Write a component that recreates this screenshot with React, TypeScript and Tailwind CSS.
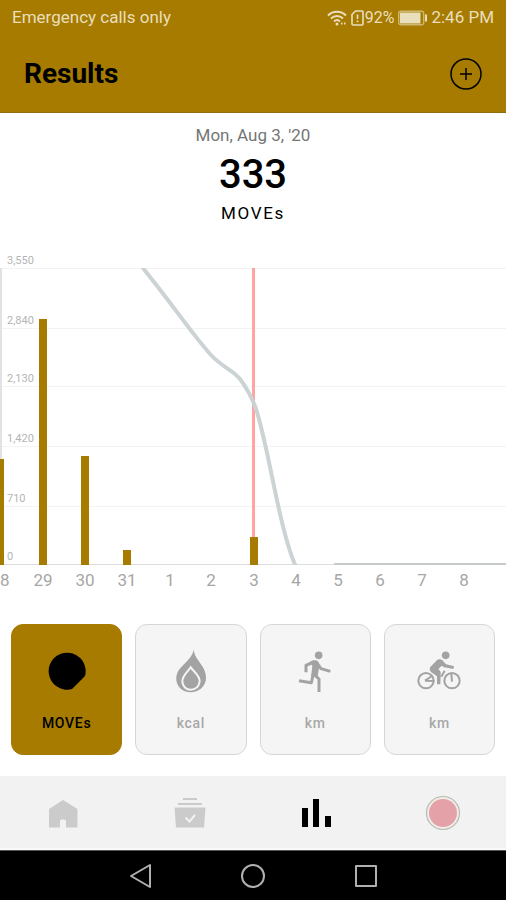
import type { ReactNode } from 'react';

const GOLD = '#a67b00';

const gridLines = [
  { label: '3,550', y: 28 },
  { label: '2,840', y: 88 },
  { label: '2,130', y: 146 },
  { label: '1,420', y: 206 },
  { label: '710', y: 266 },
  { label: '0', y: 324 },
];

const days = [
  { label: '28', x: 0, top: 219 },
  { label: '29', x: 43, top: 79 },
  { label: '30', x: 85, top: 216 },
  { label: '31', x: 127, top: 310 },
  { label: '1', x: 170 },
  { label: '2', x: 211 },
  { label: '3', x: 254, top: 297 },
  { label: '4', x: 296 },
  { label: '5', x: 338 },
  { label: '6', x: 380 },
  { label: '7', x: 422 },
  { label: '8', x: 464 },
];

function StatusBar() {
  return (
    <div className="flex h-9 items-center justify-between px-3 text-[17px] text-[#eadfbd]">
      <span>Emergency calls only</span>
      <div className="flex items-center">
        <svg width="20" height="18" viewBox="0 0 20 18" fill="none" stroke="currentColor" strokeWidth="2" aria-hidden="true">
          <path d="M1 6.500C6 1.500 14 1.500 19 6.500" />
          <path d="M4 9.500C7.500 6 12.500 6 16 9.500" />
          <path d="M7 12.500C9 10.500 11 10.500 13 12.500" />
          <circle cx="10" cy="15" r="1.500" fill="currentColor" stroke="none" />
          <path d="M14 14.500h1.500M17 14.500h1.500" />
        </svg>
        <svg className="ml-1" width="13" height="16" viewBox="0 0 13 16" fill="none" stroke="currentColor" strokeWidth="1.6" aria-hidden="true">
          <path d="M4.500 1H11a1 1 0 0 1 1 1v12a1 1 0 0 1-1 1H2a1 1 0 0 1-1-1V4.500z" />
          <path d="M6.500 4.500v4.500M6.500 10.500v1.800" />
        </svg>
        <span className="ml-px text-base">92%</span>
        <svg className="ml-1" width="29" height="16" viewBox="0 0 29 16" aria-hidden="true">
          <rect x="0.700" y="1.200" width="25" height="13.600" rx="2" fill="none" stroke="currentColor" strokeOpacity="0.600" strokeWidth="1.400" />
          <rect x="2" y="2.500" width="20.500" height="11" fill="currentColor" />
          <rect x="27" y="4.500" width="2" height="7" fill="currentColor" />
        </svg>
        <span className="ml-1">2:46 PM</span>
      </div>
    </div>
  );
}

function ResultsChart() {
  return (
    <svg className="block w-full font-normal" viewBox="0 0 506 364" role="img" aria-label="MOVEs per day">
      {gridLines.map((line) => (
        <g key={line.label}>
          <rect x="0" y={line.y} width="506" height="1" fill={line.y === 324 ? '#dedede' : '#f3f3f3'} />
          <text x="7" y={line.y - 4} fontSize="11" fill="#b4b4b4">
            {line.label}
          </text>
        </g>
      ))}
      <rect x="0" y="28" width="2" height="297" fill="#e2e2e2" />
      <rect x="252" y="28" width="3" height="297" fill="#ffa3a3" />
      <clipPath id="plot">
        <rect x="0" y="28" width="506" height="297" />
      </clipPath>
      <path
        d="M140 24L150 37C175 68 192 94 211 115C222 127 233 130 240 139C246 147 251 156 255 166C268 202 279 290 296 327"
        fill="none"
        stroke="#ccd3d4"
        strokeWidth="4"
        clipPath="url(#plot)"
      />
      <rect x="334" y="323" width="172" height="2" fill="#c6cacb" />
      {days.map((day) => (
        <g key={day.label}>
          {day.top && <rect x={day.x - 4} y={day.top} width="8" height={325 - day.top} fill={GOLD} />}
          <text x={day.x} y="346" fontSize="17" textAnchor="middle" fill="#a6a6a6">
            {day.label}
          </text>
        </g>
      ))}
    </svg>
  );
}

function MovesIcon() {
  return (
    <svg width="38" height="38" viewBox="0 0 38 38" fill="currentColor" aria-hidden="true">
      <path d="M37 24L24 37A18.500 18.500 0 1 1 37 24Z" />
    </svg>
  );
}

function FlameIcon() {
  return (
    <svg width="36" height="44" viewBox="518 99 108 132" aria-hidden="true">
      <path
        d="M580 102C583 124 598 136 609 156C632 200 601 229 572 229C539 229 521 201 530 173C537 150 575 132 580 102Z"
        fill="#a3a3a3"
      />
      <path
        d="M571 154C580 166 600 180 598 197C595 213 584 221 571 221C557 221 547 211 546 197C545 180 562 168 571 154Z"
        fill="#a3a3a3"
        stroke="#f5f5f5"
        strokeWidth="6"
      />
    </svg>
  );
}

function RunIcon() {
  return (
    <svg width="36" height="44" viewBox="132 99 108 132" fill="none" stroke="#a3a3a3" strokeWidth="9" strokeLinejoin="round" aria-hidden="true">
      <circle cx="197" cy="118" r="11.500" fill="#a3a3a3" stroke="none" />
      <path d="M159 169V148L182 138" />
      <path d="M170 138C180 131 190 131 196 137L199 150L194 180L174 183L178 150Z" fill="#a3a3a3" stroke="none" />
      <path d="M191 140L204 158L232 166" />
      <path d="M181 174L175 200L138 194" />
      <path d="M183 175L198 189V228" />
    </svg>
  );
}

function BikeIcon() {
  return (
    <svg width="44" height="44" viewBox="496 99 132 132" fill="none" stroke="#a3a3a3" strokeWidth="6" aria-hidden="true">
      <circle cx="582" cy="118" r="11.500" fill="#a3a3a3" stroke="none" />
      <circle cx="523" cy="194" r="23" />
      <circle cx="601" cy="194" r="23" />
      <path d="M520 194L541 180M520 194L548 195M601 197L599 173" />
      <path d="M569 182L579 164" />
      <path
        d="M536 153L554 134C562 127 571 129 575 136L583 145L605 150C609 153 607 159 602 158L577 154L570 149L560 160C567 165 568 170 567 176L566 205H556V181L539 169C533 164 533 158 536 153Z"
        fill="#a3a3a3"
        stroke="none"
      />
    </svg>
  );
}

function MetricCard({ label, active, children }: { label: string; active?: boolean; children: ReactNode }) {
  return (
    <button
      type="button"
      aria-pressed={!!active}
      className={`flex h-[131px] flex-1 flex-col items-center rounded-xl border pt-6 text-sm font-medium tracking-wider ${
        active ? 'border-[#a67b00] bg-[#a67b00] text-black' : 'border-[#d6d6d6] bg-[#f5f5f5] text-[#a8a8a8]'
      }`}
    >
      <span className="flex h-11 items-center">{children}</span>
      <span className="mt-5">{label}</span>
    </button>
  );
}

function TabBar() {
  return (
    <nav className="flex h-[74px] items-center border-b-2 border-[#fafafa] bg-[#f2f2f2] pt-0.5">
      <a href="#home" aria-label="Home" className="flex flex-1 justify-center">
        <svg width="30" height="36" viewBox="0 0 30 36" fill="#cbcbcb" aria-hidden="true">
          <path d="M15 5L29.500 14V32.500H18V26a1.500 1.500 0 0 0-1.500-1.500h-3A1.500 1.500 0 0 0 12 26V32.500H1V14z" />
        </svg>
      </a>
      <a href="#challenges" aria-label="Challenges" className="flex flex-1 justify-center">
        <svg width="32" height="36" viewBox="0 0 32 36" fill="#cbcbcb" aria-hidden="true">
          <rect x="9" y="3" width="14" height="2" />
          <rect x="4" y="8" width="24" height="2" />
          <path d="M0.500 12.500H31.500L30 32.500H2z" />
          <path d="M11.500 22.500L15.500 26.500L21 20" fill="none" stroke="#f2f2f2" strokeWidth="2" />
        </svg>
      </a>
      <a href="#results" aria-label="Results" aria-current="page" className="flex flex-1 justify-center">
        <svg width="30" height="36" viewBox="0 0 30 36" aria-hidden="true">
          <rect x="1" y="13" width="6" height="19" />
          <rect x="12" y="4" width="6" height="28" />
          <rect x="24" y="21" width="6" height="11" />
        </svg>
      </a>
      <a href="#profile" aria-label="Profile" className="flex flex-1 justify-center">
        <svg width="36" height="36" viewBox="0 0 36 36" aria-hidden="true">
          <circle cx="18" cy="18" r="16.500" fill="#f0eeea" stroke="#b9b9b0" strokeWidth="1.200" />
          <circle cx="18" cy="18" r="14" fill="#e4a2a8" />
        </svg>
      </a>
    </nav>
  );
}

function SystemBar() {
  return (
    <div className="flex h-[50px] items-center justify-center gap-[88px] border-t border-[#555] bg-black text-[#b0b0b0]">
      <button type="button" aria-label="Back">
        <svg width="24" height="26" viewBox="0 0 24 26" fill="none" stroke="currentColor" strokeWidth="2" strokeLinejoin="round" aria-hidden="true">
          <path d="M22 2V24L3 13z" />
        </svg>
      </button>
      <button type="button" aria-label="Home screen">
        <svg width="26" height="26" viewBox="0 0 26 26" fill="none" stroke="currentColor" strokeWidth="2" aria-hidden="true">
          <circle cx="13" cy="13" r="11" />
        </svg>
      </button>
      <button type="button" aria-label="Recent apps">
        <svg width="24" height="26" viewBox="0 0 24 26" fill="none" stroke="currentColor" strokeWidth="2" strokeLinejoin="round" aria-hidden="true">
          <rect x="2" y="3" width="20" height="20" />
        </svg>
      </button>
    </div>
  );
}

export default function App() {
  return (
    <div className="flex min-h-screen flex-col bg-white font-['Roboto',sans-serif]">
      <header className="border-b border-[#8f6c10] bg-[#a67b00]">
        <StatusBar />
        <div className="flex h-[76px] items-center justify-between px-6">
          <h1 className="text-[28px] font-bold text-black">Results</h1>
          <button type="button" aria-label="Add result">
            <svg width="32" height="32" viewBox="0 0 32 32" fill="none" stroke="black" strokeWidth="1.500" aria-hidden="true">
              <circle cx="16" cy="16" r="15" />
              <path d="M16 10v12M10 16h12" />
            </svg>
          </button>
        </div>
      </header>

      <main className="flex-1">
        <section className="flex h-[127px] flex-col items-center pt-3 text-black">
          <p className="text-[17px] leading-5 text-[#757575]">Mon, Aug 3, '20</p>
          <p className="mt-1 text-[40px] leading-[52px] font-medium">333</p>
          <p className="text-[17px] leading-6 tracking-widest">MOVEs</p>
        </section>
        <ResultsChart />
        <div className="flex gap-[13px] px-[11px] pt-5 pb-5">
          <MetricCard label="MOVEs" active>
            <MovesIcon />
          </MetricCard>
          <MetricCard label="kcal">
            <FlameIcon />
          </MetricCard>
          <MetricCard label="km">
            <RunIcon />
          </MetricCard>
          <MetricCard label="km">
            <BikeIcon />
          </MetricCard>
        </div>
      </main>

      <TabBar />
      <SystemBar />
    </div>
  );
}
